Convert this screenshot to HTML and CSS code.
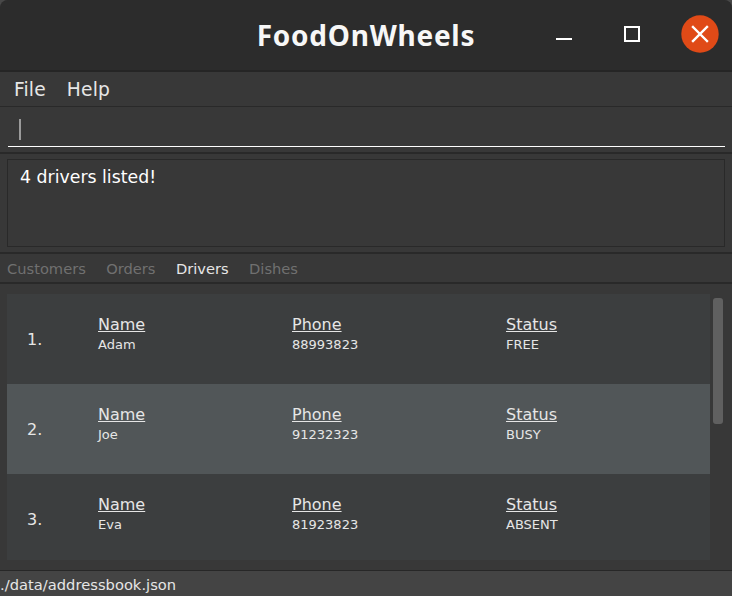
FILE: index.html
```html
<!DOCTYPE html>
<html lang="en">
<head>
<meta charset="utf-8">
<title>FoodOnWheels</title>
<link rel="stylesheet" href="styles.css">
</head>
<body>
<div class="window">
  <header class="titlebar">
    <h1 class="title">FoodOnWheels</h1>
    <div class="controls">
      <svg class="control" width="37" height="38" viewBox="0 0 37 38"><path d="M11 23h16v2H11z" fill="#fff"/></svg>
      <svg class="control" width="37" height="38" viewBox="0 0 37 38"><path d="M12 12h14v14H12z" fill="none" stroke="#fff" stroke-width="2"/></svg>
      <svg class="control" width="38" height="38" viewBox="0 0 38 38"><circle cx="19" cy="19" r="18.7" fill="#e04a17"/><path d="M12 12l14 14M26 12L12 26" fill="none" stroke="#fff" stroke-width="2.4" stroke-linecap="square"/></svg>
    </div>
  </header>
  <nav class="menubar"><span>File</span><span>Help</span></nav>
  <section class="command"><div class="command-field"><i class="caret"></i></div></section>
  <section class="result"><div class="result-box">4 drivers listed!</div></section>
  <nav class="tabs"><span>Customers</span><span>Orders</span><span class="active">Drivers</span><span>Dishes</span></nav>
  <main class="content">
    <div class="list">
      <div class="row"><span class="index">1.</span><div class="cell"><u>Name</u><small>Adam</small></div><div class="cell"><u>Phone</u><small>88993823</small></div><div class="cell"><u>Status</u><small>FREE</small></div></div>
      <div class="row even"><span class="index">2.</span><div class="cell"><u>Name</u><small>Joe</small></div><div class="cell"><u>Phone</u><small>91232323</small></div><div class="cell"><u>Status</u><small>BUSY</small></div></div>
      <div class="row"><span class="index">3.</span><div class="cell"><u>Name</u><small>Eva</small></div><div class="cell"><u>Phone</u><small>81923823</small></div><div class="cell"><u>Status</u><small>ABSENT</small></div></div>
    </div>
    <div class="scrollbar"></div>
  </main>
  <footer class="status">./data/addressbook.json</footer>
</div>
</body>
</html>
```
FILE: styles.css
```css
* { box-sizing: border-box; }
body { margin: 0; background: #484848; font-family: "DejaVu Sans", sans-serif; color: #e6e6e6; }
.window { width: 732px; height: 596px; display: flex; flex-direction: column; overflow: hidden; background: #383838; border-radius: 8px 8px 0 0; }
.titlebar { height: 72px; flex: none; display: grid; grid-template-columns: 1fr auto 1fr; background: #2c2c2c; border-bottom: 2px solid #252525; }
.title { grid-column: 2; margin: 0; font: bold 28px/70px "Noto Sans", sans-serif; letter-spacing: 0.75px; color: #f7f7f7; white-space: nowrap; }
.controls { grid-column: 3; display: flex; justify-content: flex-end; gap: 31px; padding: 15px 13px 0 0; min-width: 0; }
.control { display: block; flex: none; }
.menubar { height: 35px; flex: none; display: flex; gap: 21px; padding-left: 14px; border-bottom: 1px solid #292929; font-size: 18.67px; line-height: 36px; letter-spacing: 0.15px; }
.command { height: 47px; flex: none; padding: 0 7px 0 8px; border-bottom: 2px solid #292929; }
.command-field { height: 40px; padding: 12px 0 0 11px; border-bottom: 1px solid #fff; }
.caret { display: block; width: 2px; height: 21px; background: #9b9b9b; }
.result { height: 100px; flex: none; padding: 5px 7px; border-bottom: 2px solid #292929; }
.result-box { height: 88px; border: 1px solid #292929; padding: 7px 12px; font-size: 17.33px; line-height: 20px; color: #fff; }
.tabs { height: 30px; flex: none; display: flex; gap: 20.4px; padding-left: 7px; border-bottom: 2px solid #292929; font-size: 14.67px; line-height: 29px; color: #707070; }
.tabs .active { color: #e6e6e6; }
.content { height: 286px; flex: none; display: flex; gap: 3px; padding: 10px 9px 10px 7px; }
.list { width: 703px; overflow: hidden; background: #3c3e3f; }
.row { height: 90px; display: grid; grid-template-columns: 71px 194px 214px 1fr; padding-left: 20px; background: #3c3e3f; font-size: 16px; }
.row.even { background: #515658; }
.index { line-height: 91px; }
.cell { display: flex; flex-direction: column; padding-top: 21px; }
.cell u { line-height: 20px; text-underline-offset: 1px; text-decoration-thickness: 1px; }
.cell small { font-size: 13px; line-height: 20px; }
.scrollbar { width: 10px; height: 126px; margin-top: 4px; border-radius: 3px; background: #606060; }
.status { height: 26px; flex: none; border-top: 1px solid #272727; background: #444; font-size: 14.67px; line-height: 27px; letter-spacing: 0.03px; }
```
